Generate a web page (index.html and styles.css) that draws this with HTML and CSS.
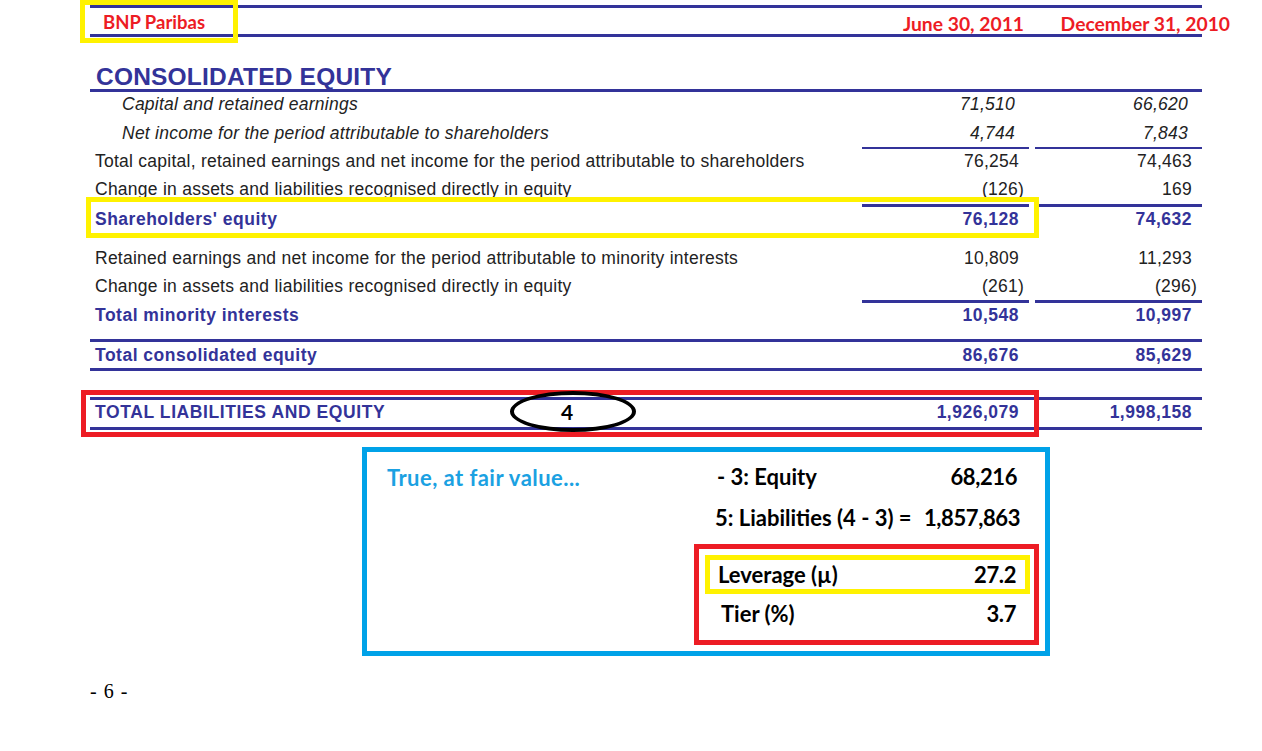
FILE: index.html
```html
<!DOCTYPE html>
<html>
<head>
<meta charset="utf-8">
<title>BNP Paribas - Consolidated equity</title>
<link rel="stylesheet" href="styles.css">
</head>
<body>
<div class="page">
  <div class="sheet">
    <div class="head">
      <div class="brand">BNP Paribas</div>
      <div class="date d1">June 30, 2011</div>
      <div class="date d2">December 31, 2010</div>
    </div>
    <div class="title">CONSOLIDATED EQUITY</div>

    <div class="row r1 it">
      <div class="lab ind">Capital and retained earnings</div>
      <div class="val">71,510</div>
      <div class="val">66,620</div>
    </div>
    <div class="row r2 it">
      <div class="lab ind">Net income for the period attributable to shareholders</div>
      <div class="val">4,744</div>
      <div class="val">7,843</div>
    </div>
    <div class="row r3">
      <div class="lab">Total capital, retained earnings and net income for the period attributable to shareholders</div>
      <div class="val">76,254</div>
      <div class="val">74,463</div>
    </div>
    <div class="row r4">
      <div class="lab">Change in assets and liabilities recognised directly in equity</div>
      <div class="val neg">(126)</div>
      <div class="val">169</div>
    </div>
    <div class="row r5 b">
      <div class="lab">Shareholders' equity</div>
      <div class="val">76,128</div>
      <div class="val">74,632</div>
    </div>

    <div class="row r6">
      <div class="lab">Retained earnings and net income for the period attributable to minority interests</div>
      <div class="val">10,809</div>
      <div class="val">11,293</div>
    </div>
    <div class="row r7">
      <div class="lab">Change in assets and liabilities recognised directly in equity</div>
      <div class="val neg">(261)</div>
      <div class="val neg">(296)</div>
    </div>
    <div class="row r8 b">
      <div class="lab">Total minority interests</div>
      <div class="val">10,548</div>
      <div class="val">10,997</div>
    </div>
    <div class="row r9 b">
      <div class="lab">Total consolidated equity</div>
      <div class="val">86,676</div>
      <div class="val">85,629</div>
    </div>
    <div class="row r10 b">
      <div class="lab caps">TOTAL LIABILITIES AND EQUITY</div>
      <div class="val">1,926,079</div>
      <div class="val">1,998,158</div>
    </div>
  </div>

  <div class="fair">
    <div class="fv">True, at fair value...</div>
    <div class="calc">
      <div class="line l1"><span>- 3: Equity</span><span class="num">68,216</span></div>
      <div class="line l2"><span>5: Liabilities (4 - 3) =</span><span class="num">1,857,863</span></div>
      <div class="ratio">
        <div class="lev"><span>Leverage (µ)</span><span class="num">27.2</span></div>
        <div class="tier"><span>Tier (%)</span><span class="num">3.7</span></div>
      </div>
    </div>
  </div>

  <div class="pageno">- 6 -</div>

  <div class="mark mark-brand"></div>
  <div class="mark mark-share"></div>
  <div class="mark mark-total"></div>
  <div class="oval">4</div>
</div>
</body>
</html>
```

FILE: styles.css
```css
* { box-sizing: content-box; }
html, body { margin: 0; padding: 0; background: #ffffff; }
body { font-family: "Liberation Sans", Arial, sans-serif; color: #222222; }

.page { position: relative; width: 1262px; height: 751px; overflow: hidden; }

.sheet { margin-left: 90px; width: 1112px; }

/* header band */
.head {
  margin-top: 5px;
  height: 26px;
  border-top: 3px solid #333399;
  border-bottom: 3px solid #333399;
  display: grid;
  grid-template-columns: 766px 167px 167px;
  column-gap: 6px;
  font-family: Lato, "Open Sans", sans-serif;
  font-weight: bold;
  color: #ed1c24;
}
.brand { padding: 2px 0 0 13px; line-height: 24px; font-size: 18.5px; }
.date { padding-top: 4px; line-height: 24px; font-size: 19.3px; text-align: right; white-space: nowrap; }
.d1 { padding-right: 5px; }
.d2 { margin-right: -28px; }

.title {
  padding: 28px 0 0 6px;
  line-height: 24px;
  font-size: 24.5px;
  font-weight: bold;
  letter-spacing: 0.2px;
  color: #333399;
  border-bottom: 3px solid #333399;
}

/* table rows */
.row {
  display: grid;
  grid-template-columns: 766px 167px 167px;
  column-gap: 6px;
  font-size: 17.5px;
  letter-spacing: 0.25px;
  line-height: 28px;
  white-space: nowrap;
}
.lab { padding-left: 5px; }
.ind { padding-left: 32px; }
.val { text-align: right; padding-right: 10px; }
.it { font-style: italic; }
.it .val { padding-right: 14px; }
.val.neg { padding-right: 5px; }
.b { font-weight: bold; color: #333399; letter-spacing: 0.5px; }
.caps { letter-spacing: 0.6px; }

.r1 { line-height: 24px; }
.r2 { padding-top: 3px; line-height: 28px; }
.r3 > div { border-top: 2px solid transparent; line-height: 24px; }
.r3 > .val { border-top-color: #333399; }
.r4 { padding-top: 1px; line-height: 30px; }
.r5 > div { border-top: 3px solid transparent; line-height: 24px; }
.r5 > .val { border-top-color: #333399; }
.r6 { margin-top: 13px; line-height: 28px; }
.r7 { line-height: 28px; }
.r8 > div { border-top: 3px solid transparent; line-height: 24px; }
.r8 > .val { border-top-color: #333399; }
.r9 {
  margin-top: 12px;
  line-height: 26px;
  border-top: 3px solid #333399;
  border-bottom: 3px solid #333399;
}
.r10 {
  margin-top: 26px;
  line-height: 24px;
  padding-bottom: 3px;
  border-top: 3px solid #333399;
  border-bottom: 3px solid #333399;
}

/* fair value box */
.fair {
  margin: 17px 0 0 362px;
  width: 678px;
  height: 199px;
  border: 5px solid #00a2e8;
  display: flex;
  justify-content: space-between;
  font-family: Lato, "Open Sans", sans-serif;
  font-weight: bold;
  font-size: 22px;
  color: #000000;
}
.fv { padding: 13px 0 0 20px; line-height: 26px; color: #1ba1e2; letter-spacing: 0.45px; white-space: nowrap; }
.calc { width: 345px; margin: 0 6px 6px 0; padding-top: 12px; align-self: flex-end; white-space: nowrap; }
.num { letter-spacing: -0.4px; }
.line { display: flex; justify-content: space-between; line-height: 26px; }
.l1 { padding: 0 22px 0 23px; }
.l2 { margin-top: 15px; padding: 0 19px 0 21px; }
.ratio { margin-top: 13px; border: 5px solid #ed1c24; height: 78px; padding-bottom: 13px; }
.lev {
  margin: 6px 4px 0 6px;
  border: 5px solid #fff200;
  line-height: 29px;
  padding: 0 9px 0 8px;
  display: flex;
  justify-content: space-between;
}
.tier { margin-top: 7px; line-height: 26px; padding: 0 18px 0 22px; display: flex; justify-content: space-between; }

.pageno {
  margin: 25px 0 0 90px;
  font-family: "Liberation Serif", "Times New Roman", serif;
  font-size: 20px;
  line-height: 20px;
  word-spacing: 2px;
  color: #000000;
}

/* annotation overlays */
.mark { position: absolute; box-sizing: border-box; border: 5px solid #fff200; }
.mark-brand { left: 80px; top: 0; width: 158px; height: 43px; }
.mark-share { left: 86px; top: 197px; width: 953px; height: 41px; }
.mark-total { left: 81px; top: 390px; width: 958px; height: 47px; border-color: #ed1c24; }
.oval {
  position: absolute;
  left: 510px;
  top: 391px;
  width: 126px;
  height: 41px;
  box-sizing: border-box;
  border: 4px solid #000000;
  border-radius: 50%;
  display: flex;
  align-items: center;
  justify-content: center;
  padding-right: 12px;
  font-family: Lato, "Open Sans", sans-serif;
  font-weight: bold;
  font-size: 21px;
  color: #000000;
}
```
